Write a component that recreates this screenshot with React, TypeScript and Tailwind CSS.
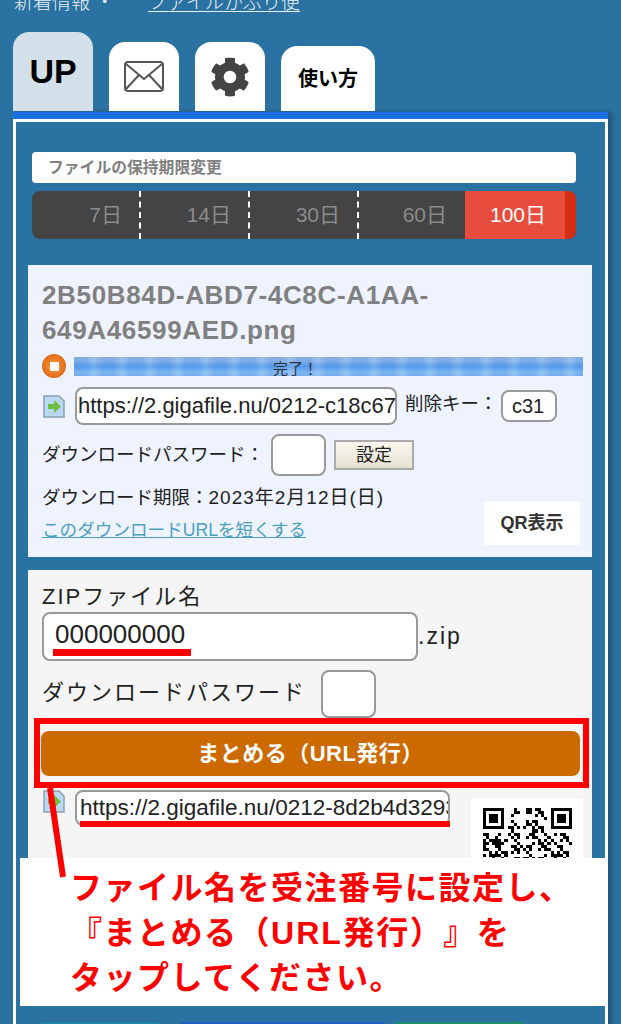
import { FaCog } from "react-icons/fa"

const qrSize = 29

// finder squares sit in three corners, the rest is a fixed noisy pattern
const isFinder = (x: number, y: number, ox: number, oy: number) => {
  const dx = x - ox
  const dy = y - oy
  if (dx < 0 || dy < 0 || dx > 6 || dy > 6) return false
  if (dx === 0 || dy === 0 || dx === 6 || dy === 6) return true
  return dx >= 2 && dx <= 4 && dy >= 2 && dy <= 4
}

const inFinderZone = (x: number, y: number) =>
  (x < 8 && y < 8) || (x > qrSize - 9 && y < 8) || (x < 8 && y > qrSize - 9)

const qrCells = () => {
  const cells: { x: number; y: number }[] = []
  for (let y = 0; y < qrSize; y++) {
    for (let x = 0; x < qrSize; x++) {
      const finder =
        isFinder(x, y, 0, 0) || isFinder(x, y, qrSize - 7, 0) || isFinder(x, y, 0, qrSize - 7)
      const noise = (x * 7 + y * 13 + ((x * y) % 7) * 5 + ((x ^ y) % 3)) % 5 < 2
      if (finder || (!inFinderZone(x, y) && noise)) cells.push({ x, y })
    }
  }
  return cells
}

const FileIcon = () => (
  <svg width="24" height="23" viewBox="0 0 24 23" className="shrink-0">
    <path d="M2 1h15l5 5v16H2z" fill="#b9d8f2" stroke="#8aa0b4" strokeWidth="1.5" />
    <path d="M6 9h6V5l7 6.500-7 6.500v-4H6z" fill="#6fbf3f" />
  </svg>
)

const Field = ({ value, className }: { value: string; className: string }) => (
  <input
    readOnly
    value={value}
    className={`rounded-lg border-2 border-[#999] bg-white text-[#222] outline-none ${className}`}
  />
)

export default function App() {
  return (
    <div className="relative h-[1024px] w-[621px] overflow-hidden bg-[#2a72a1] font-['Liberation_Sans','Noto_Sans_CJK_JP',sans-serif]">
      {/* header line, cut off by the top of the page */}
      <div className="-mt-[10px] flex h-[26px] items-center pl-[14px] text-[19px] leading-[26px] font-light text-[#e8f0f5]">
        <span className="w-[134px]">新着情報 ・</span>
        <a className="underline underline-offset-2">ファイルかぶり便</a>
      </div>

      {/* tabs */}
      <div className="mt-4 ml-[13px] flex h-[79px] items-end">
        <div className="flex h-[79px] w-[80px] items-center justify-center rounded-t-2xl bg-[#d3e0ea] text-[34px] font-bold text-black">
          UP
        </div>
        <div className="ml-4 flex h-[69px] w-[70px] items-center justify-center rounded-t-2xl bg-white">
          <svg width="40" height="31" viewBox="0 0 40 31" fill="none" stroke="#555" strokeWidth="2">
            <rect x="1" y="1" width="38" height="29" rx="3" />
            <path d="M2 3l18 15 18-15M2 28l13-14M38 28l-13-14" />
          </svg>
        </div>
        <div className="ml-4 flex h-[69px] w-[70px] items-center justify-center rounded-t-2xl bg-white">
          <FaCog className="text-[40px] text-[#444]" />
        </div>
        <div className="ml-4 flex h-[65px] w-[94px] items-center justify-center rounded-t-2xl bg-white text-[20px] font-bold text-black">
          使い方
        </div>
      </div>

      {/* main box */}
      <div className="mt-px ml-[13px] h-[1000px] w-[595px] border-t-[7px] border-[#1a6fe0] shadow-[4px_0_4px_rgba(0,0,0,0.25)]">
        <div className="h-full border-[3px] border-white">
          <div className="px-4 pt-[30px] pr-[29px]">
            <div className="flex h-[31px] items-center rounded bg-white pl-4 text-[15.800px] font-bold text-[#808080]">
              ファイルの保持期限変更
            </div>
            <div className="mt-2 flex h-12 overflow-hidden rounded-lg bg-[#444] text-[21px] text-[#8b8b8b]">
              <div className="flex w-[109px] items-center justify-end border-r-2 border-dashed border-white pr-[17px]">7日</div>
              <div className="flex w-[109px] items-center justify-end border-r-2 border-dashed border-white pr-[17px]">14日</div>
              <div className="flex w-[109px] items-center justify-end border-r-2 border-dashed border-white pr-[17px]">30日</div>
              <div className="flex w-[106px] items-center justify-end pr-[18px]">60日</div>
              <div className="flex w-[100px] items-center justify-center bg-[#e74c3c] pl-[6px] text-white">100日</div>
              <div className="w-[11px] bg-[#d42f12]" />
            </div>
          </div>

          {/* uploaded file */}
          <div className="mt-[26px] ml-3 h-[292px] w-[564px] bg-[#eef3ff] pt-[13px] pr-3 pl-[14px]">
            <div className="text-[26px] leading-[35px] font-bold tracking-[0.650px] text-[#808080]">
              2B50B84D-ABD7-4C8C-A1AA-
              <br />
              649A46599AED.png
            </div>
            <div className="mt-[6px] flex h-6 items-center">
              <div className="flex h-6 w-6 shrink-0 items-center justify-center rounded-full bg-[radial-gradient(circle,#f7a040,#d9540a)]">
                <div className="h-[9px] w-[9px] bg-white" />
              </div>
              <div className="relative ml-2 -mr-[3px] h-[19px] flex-1 bg-[repeating-linear-gradient(90deg,rgba(50,120,225,0.16)_0,rgba(50,120,225,0.16)_12px,rgba(255,255,255,0.1)_20px,rgba(50,120,225,0.16)_28px),linear-gradient(180deg,#93b6e2,#8fb6e8_20%,#5a9fec_50%,#8cc0f4_80%,#7fb6f2)]">
                <span className="absolute top-[2px] left-[199px] text-[15px] leading-[20px] text-[#333]">完了！</span>
              </div>
            </div>
            <div className="mt-[9px] flex h-[38px] items-center">
              <FileIcon />
              <Field value="https://2.gigafile.nu/0212-c18c67" className="ml-[9px] h-[38px] w-[322px] pl-px text-[22px]" />
              <span className="ml-2 w-[96px] pb-1 text-[18.500px] text-[#222]">削除キー：</span>
              <Field value="c31" className="h-[32px] w-[56px] px-[9px] text-[20px]" />
            </div>
            <div className="mt-[9px] flex h-[42px] items-center">
              <span className="w-[229px] text-[18.500px] text-[#222]">ダウンロードパスワード：</span>
              <Field value="" className="h-[42px] w-[55px]" />
              <button className="ml-2 h-[30px] w-[80px] border-2 border-[#aaa] bg-[linear-gradient(180deg,#f8f6ee,#e6e2d2)] text-[18px] text-[#222]">
                設定
              </button>
            </div>
            <div className="mt-[10px] flex h-[59px] items-end justify-between">
              <div className="pb-[3px]">
                <div className="text-[18.500px] leading-6 text-[#222]">
                  ダウンロード期限：<span className="text-[19px] tracking-[1px]">2023年2月12日(日)</span>
                </div>
                <a className="mt-2 block text-[17.600px] leading-6 text-[#4a9fc0] underline">このダウンロードURLを短くする</a>
              </div>
              <div className="flex h-11 w-24 items-center justify-center bg-white text-[18px] font-bold text-[#333]">
                QR表示
              </div>
            </div>
          </div>

          {/* zip */}
          <div className="mt-[13px] ml-3 h-[430px] w-[564px] overflow-hidden bg-[#f5f5f5] pt-[14px] pl-[14px]">
            <div className="text-[22px] leading-[26px] tracking-[2px] text-[#222]">ZIPファイル名</div>
            <div className="mt-[2px] flex items-center">
              <Field value="000000000" className="h-[49px] w-[376px] pb-1 pl-[11px] text-[26px]" />
              <span className="text-[23px] tracking-[2px] text-[#222]">.zip</span>
            </div>
            <div className="mt-[9px] flex h-12 items-center">
              <span className="w-[279px] pb-1 text-[22px] tracking-[2px] text-[#222]">ダウンロードパスワード</span>
              <Field value="" className="h-12 w-[55px]" />
            </div>
            <button className="mt-[13px] -ml-px flex h-[45px] w-[539px] items-center justify-center rounded-lg bg-[#cc6a00] text-[22px] font-bold tracking-[0.500px] text-white">
              まとめる（URL発行）
            </button>
            <div className="mt-[14px] flex items-start">
              <FileIcon />
              <Field value="https://2.gigafile.nu/0212-8d2b4d3293" className="ml-[9px] h-9 w-[375px] pl-[3px] text-[22.500px]" />
              <div className="mt-2 ml-[21px] flex h-[90px] w-[112px] justify-center bg-white pt-[10px]">
                <svg width="89" height="89" viewBox="0 0 29 29" shapeRendering="crispEdges">
                  {qrCells().map((c) => (
                    <rect key={`${c.x}-${c.y}`} x={c.x} y={c.y} width="1" height="1" fill="#000" />
                  ))}
                </svg>
              </div>
            </div>
          </div>

          <div className="mt-[22px] ml-6 flex h-4">
            <div className="w-[120px] rounded-t bg-[#1f86a8]" />
            <div className="ml-5 w-[205px] rounded-t bg-[#1a60c0]" />
            <div className="ml-[10px] w-[130px] rounded-t bg-[#1f8f6a]" />
          </div>
        </div>
      </div>

      {/* red annotations */}
      <div className="absolute top-[649px] left-[53px] h-[7px] w-[138px] bg-[#f00]" />
      <div className="absolute top-[718px] left-[34px] h-[70px] w-[555px] border-[6px] border-[#f00]" />
      <div className="absolute top-[821px] left-[80px] h-[6px] w-[370px] bg-[#f00]" />
      <div className="absolute top-[858px] left-[20px] h-[148px] w-[586px] bg-white pt-[8px] pl-[50px] text-[32px] leading-[45px] font-bold tracking-[1.500px] text-[#f00] [text-spacing-trim:space-all]">
        ファイル名を受注番号に設定し、
        <br />
        『まとめる（<span className="tracking-[2px]">URL</span>発行）』を
        <br />
        タップしてください。
      </div>
      <svg className="absolute top-[788px] left-[40px]" width="30" height="92" viewBox="0 0 30 92">
        <path d="M10 0L23 89" stroke="#f00" strokeWidth="6" />
      </svg>
    </div>
  )
}
